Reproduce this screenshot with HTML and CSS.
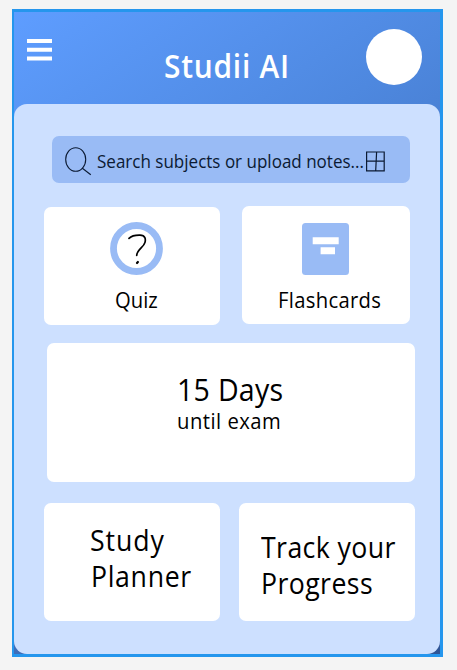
FILE: index.html
```html
<!DOCTYPE html>
<html lang="en">
<head>
<meta charset="utf-8">
<title>Studii AI</title>
<link rel="stylesheet" href="styles.css">
</head>
<body>
<div class="frame">
  <header class="header">
    <svg class="menu" width="25" height="22" viewBox="0 0 25 22" fill="#fff"><path d="M0 0h25v4H0zM0 8.8h25v4H0zM0 17.6h25v4H0z"/></svg>
    <h1 class="title"><span class="text">Studii AI</span></h1>
    <div class="avatar"></div>
  </header>
  <main class="panel">
    <div class="search">
      <svg class="lens" width="27" height="29" viewBox="0 0 27 29" fill="none" stroke="#0b1a33" stroke-width="1.1"><ellipse cx="10.7" cy="12.5" rx="10" ry="11.7"/><path d="M17 21l8.800 6.800"/></svg>
      <span class="text search-text">Search subjects or upload notes...</span>
      <svg class="grid-icon" width="19" height="21" viewBox="0 0 19 21" fill="none" stroke="#0b1a33" stroke-width="1.2"><path d="M.6 1h17.600v18.800H.6zM.6 10.200h17.600M10.600 1L9.700 19.800"/></svg>
    </div>
    <div class="row">
      <section class="card quiz">
        <svg width="53" height="53" viewBox="0 0 53 53" fill="none"><circle cx="26.500" cy="26.500" r="23" stroke="#99bbf5" stroke-width="6.800"/><path d="M19 16.400c3-3 7-3.300 11-3.200 5.500.2 5.800 4 5 7.200-1.200 5-8 6.800-8.300 13" stroke="#000" stroke-width="1.700" stroke-linecap="round"/><path d="M27 41l.9-1" stroke="#000" stroke-width="2.200" stroke-linecap="round"/></svg>
        <span class="text">Quiz</span>
      </section>
      <section class="card flash">
        <svg width="47" height="52" viewBox="0 0 47 52"><rect width="47" height="52" rx="3.500" fill="#99bbf5"/><path d="M10.700 14.200h26v7h-26zM18.600 24.200h14.400v7H18.600z" fill="#fff"/></svg>
        <span class="text">Flashcards</span>
      </section>
    </div>
    <section class="card countdown">
      <span class="text days">15 Days</span>
      <span class="text until">until exam</span>
    </section>
    <div class="row bottom">
      <section class="card planner"><span class="text study">Study</span><span class="text plan">Planner</span></section>
      <section class="card progress"><span class="text track">Track your</span><span class="text prog">Progress</span></section>
    </div>
  </main>
</div>
</body>
</html>
```
FILE: styles.css
```css
* { box-sizing: border-box; }
body {
  margin: 0;
  padding: 9px 0 0 12px;
  background: #f4f4f4;
  color: #000;
  font-family: "Open Sans", "Noto Sans", sans-serif;
}
.frame {
  width: 431px;
  height: 648px;
  border: solid #2596ed;
  border-width: 3px 3px 3px 2px;
  background: linear-gradient(145deg, #5e9dff 0, #4e88df 34%, #2f5596 100%);
}
.text {
  display: block;
  width: max-content;
  white-space: nowrap;
  letter-spacing: .015em;
  transform: scaleX(.92);
  transform-origin: 0 50%;
}
.header { display: flex; height: 92px; align-items: flex-start; }
.menu { margin: 27px 0 0 13px; }
.title {
  width: 202px;
  margin: 34px 0 0 112px;
  font-size: 32.500px;
  line-height: 40px;
  font-weight: 600;
  color: #fff;
}
.title .text { letter-spacing: .025em; }
.avatar { width: 56px; height: 56px; margin-top: 17px; border-radius: 50%; background: #fff; }
.panel {
  height: 550px;
  padding: 32px 0 0 29.500px;
  border-radius: 13px;
  background: #cde0ff;
}
.search {
  display: flex;
  width: 358px;
  height: 46.500px;
  margin-left: 8.500px;
  padding-left: 13px;
  border-radius: 7px;
  background: #99bbf5;
}
.lens { margin-top: 11px; }
.search-text { width: 270px; margin-left: 5px; color: #0b1a33; font-size: 18.500px; line-height: 49px; letter-spacing: 0; }
.grid-icon { margin: 14.500px 0 0 -1px; }
.row { display: flex; align-items: flex-start; margin-top: 23.500px; }
.card { height: 118px; border-radius: 7px; background: #fff; }
.row svg { display: block; }
.quiz, .flash { font-size: 22px; line-height: 30px; margin-top: 1px; }
.quiz { width: 176px; padding: 14.500px 0 0 66.500px; }
.quiz .text { margin: 9px 0 0 5px; letter-spacing: 0; }
.flash { width: 168px; margin: 0 0 0 22.500px; padding: 17px 0 0 60px; }
.flash .text { margin: 8.500px 0 0 -24.500px; }
.countdown {
  width: 368px;
  height: 139.500px;
  margin: 17.500px 0 0 3px;
  padding: 26px 0 0 130px;
}
.days { font-size: 31px; line-height: 40px; letter-spacing: .01em; }
.until { font-size: 22px; line-height: 22px; letter-spacing: .024em; }
.bottom { margin-top: 20.500px; }
.planner, .progress { width: 176px; font-size: 29px; line-height: 36px; }
.planner { padding: 19px 0 0 46.500px; }
.study { letter-spacing: .035em; }
.plan { margin-left: 1px; letter-spacing: .025em; }
.progress { margin-left: 19px; padding: 26px 0 0 22px; }
```
